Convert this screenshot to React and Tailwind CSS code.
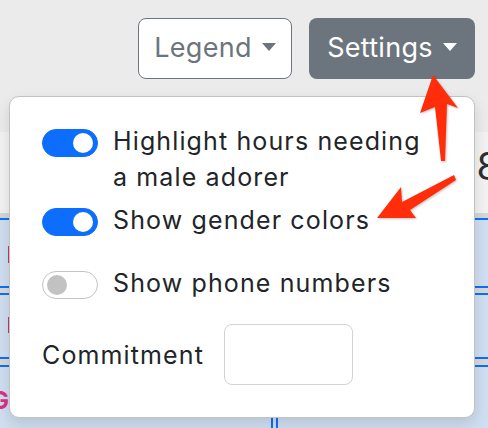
import React, { useState } from 'react';

function Toggle({ on }) {
  return (
    <div
      className={
        'relative shrink-0 w-[56px] h-[28px] rounded-full border ' +
        (on ? 'bg-[#0d6efd] border-[#0d6efd]' : 'bg-white border-[#c4c4c4]')
      }
    >
      <div
        className={
          'absolute top-[3px] w-[20px] h-[20px] rounded-full ' +
          (on ? 'right-[4px] bg-white' : 'left-[4px] bg-[#c2c2c2]')
        }
      />
    </div>
  );
}

function Caret() {
  return <span className="inline-block w-0 h-0 border-t-[8px] border-x-[7px] border-x-transparent border-t-current ml-[10px] mb-[4px]" />;
}

export default function App() {
  const [settings] = useState([
    { label: ['Highlight hours needing', 'a male adorer'], on: true, mt: 'mt-0' },
    { label: ['Show gender colors'], on: true, mt: 'mt-[7px]' },
    { label: ['Show phone numbers'], on: false, mt: 'mt-[27px]' },
  ]);

  return (
    <div
      className="relative w-[488px] h-[428px] overflow-hidden bg-[#ebebeb] text-[#212529]"
      style={{ fontFamily: 'Inter, "Liberation Sans", sans-serif' }}
    >
      {/* toolbar */}
      <div className="h-[132px] flex justify-end items-start gap-[17px] pt-[18px] pr-[13px]">
        <button className="w-[154px] h-[61px] flex items-center justify-center rounded-[8px] border border-[#6c757d] bg-white text-[#6c757d] text-[27px] tracking-[0.01em]">
          Legend
          <Caret />
        </button>
        <button className="w-[166px] h-[61px] flex items-center justify-center rounded-[8px] bg-[#6c757d] text-white text-[27px] tracking-[0.01em]">
          Settings
          <Caret />
        </button>
      </div>

      {/* calendar behind */}
      <div className="h-[81px] bg-[#f2f2f2] flex items-center justify-end overflow-hidden">
        <span className="text-[38px] leading-none text-[#2b2f33] mr-[-12px] mb-[14px]">8</span>
      </div>
      <div className="h-[5px] bg-[#d6d6d6]" />
      <div className="h-[2px] bg-[#0d6efd]" />
      <div className="bg-[#cfdef0]">
        <div className="h-[66px] flex">
          <div className="w-[2px] h-[17px] ml-[8px] mt-[26px] bg-[#c2336f]" />
        </div>
        <div className="h-[2px] bg-[#0d6efd]" />
        <div className="h-[5px] bg-[#d8d8d8]" />
        <div className="h-[2px] bg-[#0d6efd]" />
        <div className="h-[62px] flex">
          <div className="w-[2px] h-[16px] ml-[8px] mt-[22px] bg-[#c2336f]" />
        </div>
        <div className="h-[2px] bg-[#0d6efd]" />
        <div className="h-[6px] bg-[#d8d8d8]" />
        <div className="h-[2px] bg-[#0d6efd]" />
        <div className="h-[61px] flex">
          <span className="text-[24px] font-bold leading-none text-[#d63384] ml-[-9px] mt-[22px]">G</span>
          <div className="ml-[262px] w-[7px] h-full border-x-2 border-[#0d6efd]" />
        </div>
      </div>

      {/* settings dropdown */}
      <div className="absolute left-[9px] top-[96px] w-[466px] h-[322px] rounded-[10px] border border-[#c2c2c2] bg-white shadow-[0_6px_14px_rgba(0,0,0,0.12)] pt-[26px] pl-[32px] text-[25px] tracking-[0.045em] leading-[36px]">
        {settings.map((s, i) => (
          <div key={i} className={'flex items-start gap-[15px] ' + s.mt}>
            <div className="mt-[6px]">
              <Toggle on={s.on} />
            </div>
            <div>
              {s.label.map((l) => (
                <div key={l}>{l}</div>
              ))}
            </div>
          </div>
        ))}
        <div className="flex items-center mt-[23px]">
          <span className="w-[182px]">Commitment</span>
          <input className="w-[129px] h-[61px] rounded-[8px] border border-[#ced4da] bg-white" />
        </div>
      </div>

      {/* annotation arrows */}
      <svg
        className="absolute inset-0 pointer-events-none"
        width="488"
        height="428"
        viewBox="0 0 488 428"
        style={{ filter: 'drop-shadow(1px 1px 1px rgba(0,0,0,0.25))' }}
      >
        <polygon
          fill="#ff2d0a"
          points="433,75 458,108 447,104 445,161 441,161 435,107 420,113"
        />
        <polygon
          fill="#ff2d0a"
          points="377,218 401,187 402,202 454,175 456,180 410,210 416,218"
        />
      </svg>
    </div>
  );
}
